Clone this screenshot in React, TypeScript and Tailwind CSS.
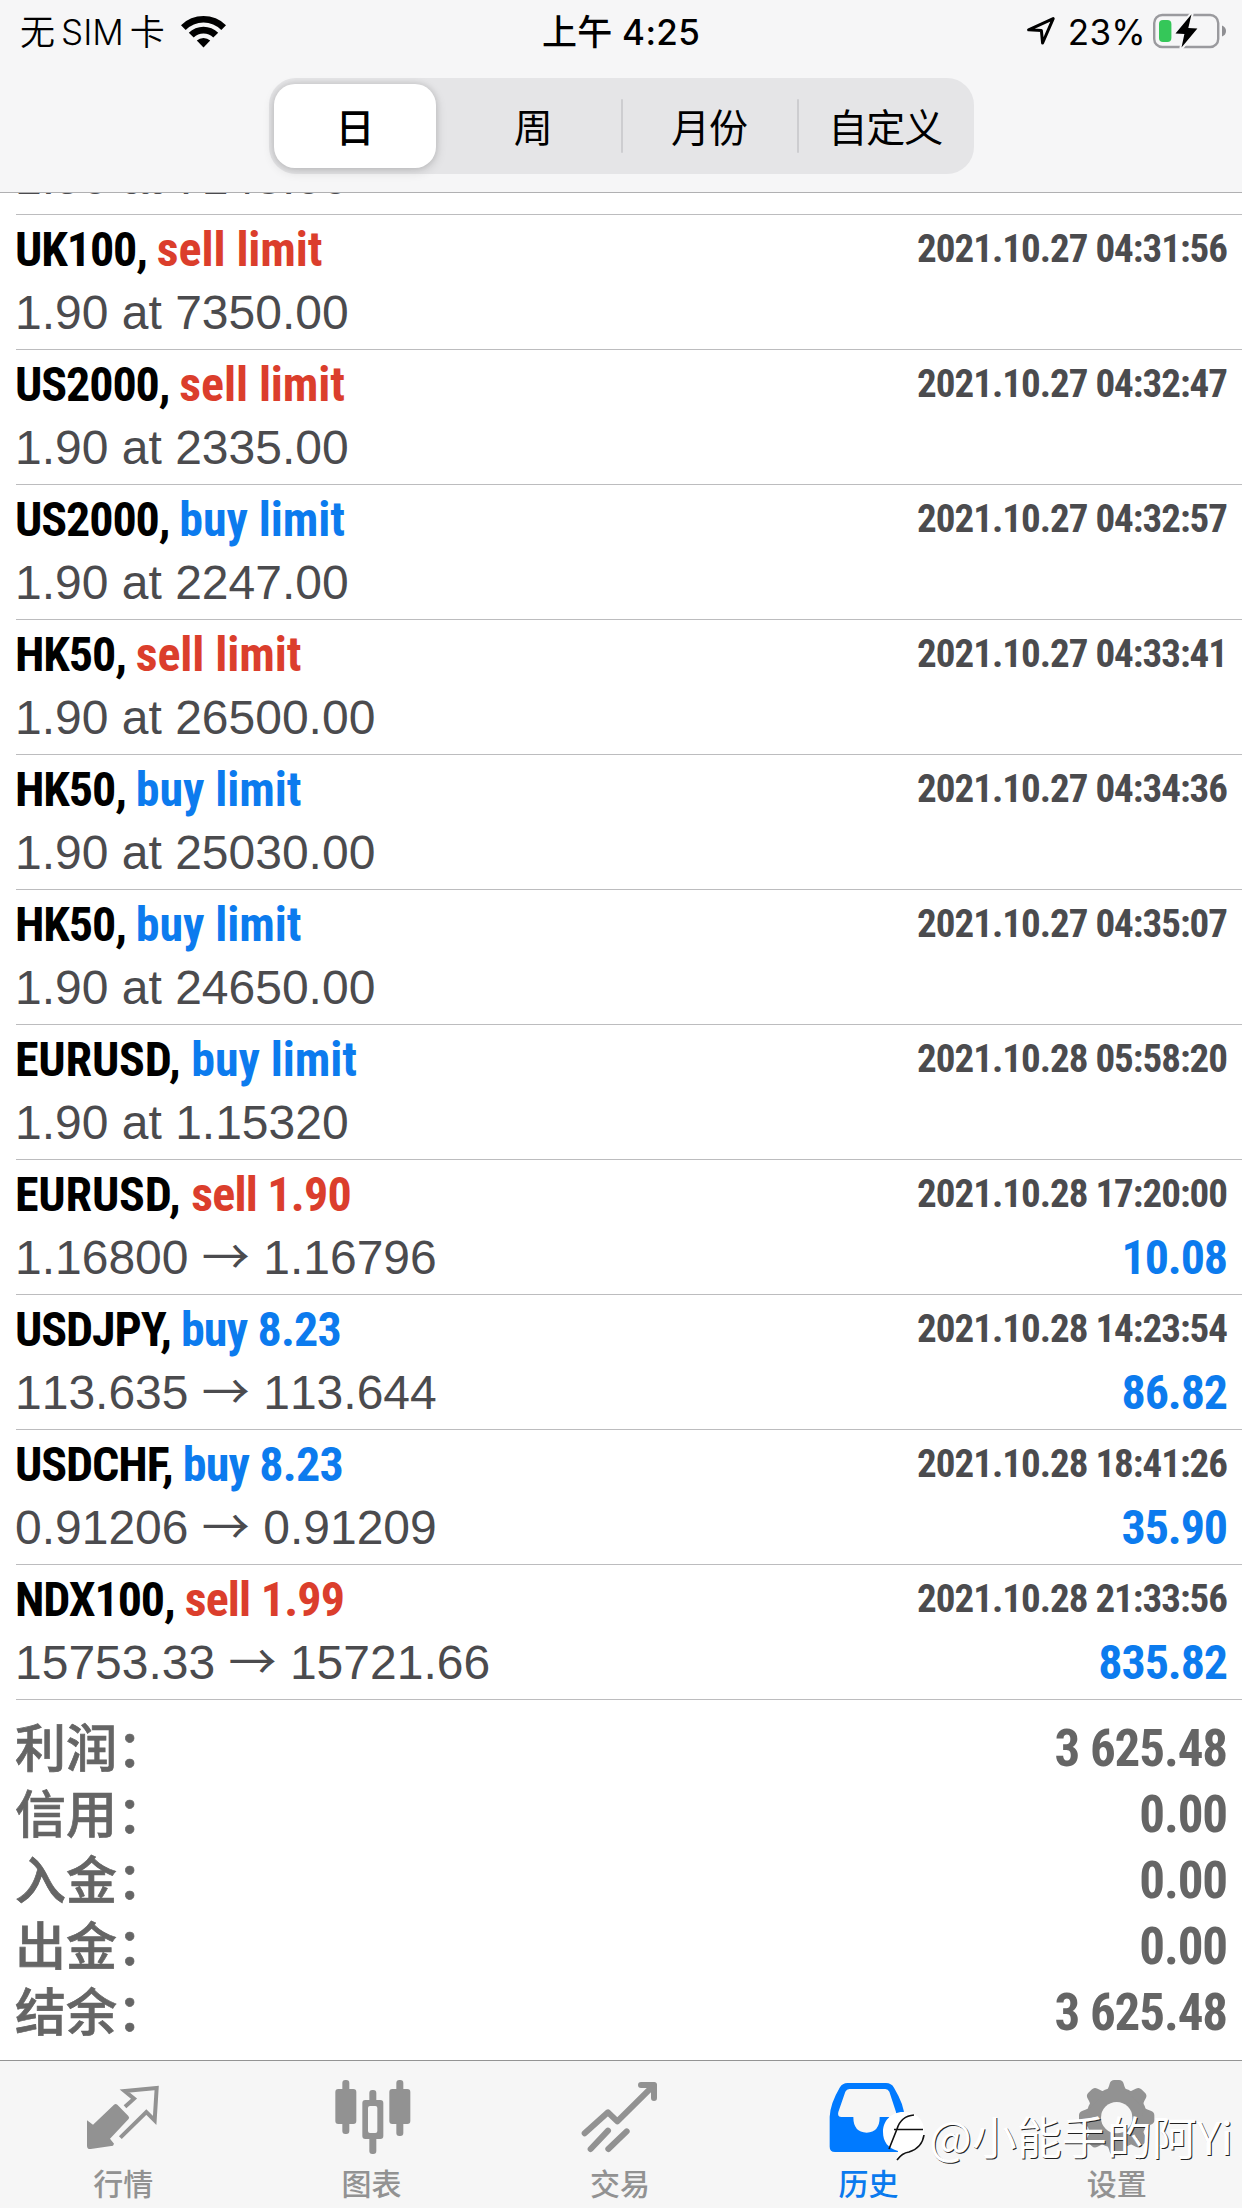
import React from "react"
import clsx from "clsx"

type Side = "sell" | "buy"

interface Deal {
  symbol: string
  side: Side
  action: string
  time: string
  price: string
  closePrice?: string
  profit?: string
}

const deals: Deal[] = [
  { symbol: "UK100", side: "buy", action: "buy limit", time: "2021.10.27 04:31:48", price: "1.90 at 7143.00" },
  { symbol: "UK100", side: "sell", action: "sell limit", time: "2021.10.27 04:31:56", price: "1.90 at 7350.00" },
  { symbol: "US2000", side: "sell", action: "sell limit", time: "2021.10.27 04:32:47", price: "1.90 at 2335.00" },
  { symbol: "US2000", side: "buy", action: "buy limit", time: "2021.10.27 04:32:57", price: "1.90 at 2247.00" },
  { symbol: "HK50", side: "sell", action: "sell limit", time: "2021.10.27 04:33:41", price: "1.90 at 26500.00" },
  { symbol: "HK50", side: "buy", action: "buy limit", time: "2021.10.27 04:34:36", price: "1.90 at 25030.00" },
  { symbol: "HK50", side: "buy", action: "buy limit", time: "2021.10.27 04:35:07", price: "1.90 at 24650.00" },
  { symbol: "EURUSD", side: "buy", action: "buy limit", time: "2021.10.28 05:58:20", price: "1.90 at 1.15320" },
  { symbol: "EURUSD", side: "sell", action: "sell 1.90", time: "2021.10.28 17:20:00", price: "1.16800", closePrice: "1.16796", profit: "10.08" },
  { symbol: "USDJPY", side: "buy", action: "buy 8.23", time: "2021.10.28 14:23:54", price: "113.635", closePrice: "113.644", profit: "86.82" },
  { symbol: "USDCHF", side: "buy", action: "buy 8.23", time: "2021.10.28 18:41:26", price: "0.91206", closePrice: "0.91209", profit: "35.90" },
  { symbol: "NDX100", side: "sell", action: "sell 1.99", time: "2021.10.28 21:33:56", price: "15753.33", closePrice: "15721.66", profit: "835.82" },
]

const summary = [
  { label: "利润：", value: "3 625.48" },
  { label: "信用：", value: "0.00" },
  { label: "入金：", value: "0.00" },
  { label: "出金：", value: "0.00" },
  { label: "结余：", value: "3 625.48" },
]

const periods = ["日", "周", "月份", "自定义"]

function WifiIcon() {
  return (
    <svg viewBox="0 0 45 33" className="ml-[16px] h-[33px] w-[45px]">
      <path d="M0 10.2A32 32 0 0 1 45 10.2L40.3 14.9A25.2 25.2 0 0 0 4.7 14.9Z" />
      <path d="M7.8 17.8A20.8 20.8 0 0 1 37.2 17.8L32.3 22.6A13.9 13.9 0 0 0 12.7 22.6Z" />
      <path d="M15.8 25.6A9.6 9.6 0 0 1 29.2 25.6L22.5 32.6Z" />
    </svg>
  )
}

function LocationIcon() {
  return (
    <svg viewBox="0 0 30 30" className="h-[30px] w-[30px]" fill="none" stroke="#000" strokeWidth="3" strokeLinejoin="round">
      <path d="M27.2 2.6L2.6 13.8L15.4 14.6L16.6 27Z" />
    </svg>
  )
}

function BatteryIcon() {
  return (
    <svg viewBox="0 0 74 36" className="ml-[7px] h-9 w-[74px]">
      <rect x="1.2" y="2" width="64" height="32" rx="8" fill="none" stroke="#9a9a9e" strokeWidth="2.4" />
      <path d="M69 12.5Q73 14 73 18Q73 22 69 23.5Z" fill="#8f8f93" />
      <rect x="6" y="7" width="12.4" height="22" rx="4" fill="#35c759" />
      <path
        d="M38.5 1.2L22.5 20.5L31.4 21L28.5 34.6L44.4 15.4L35.3 15Z"
        fill="#000"
        stroke="#f6f6f7"
        strokeWidth="4"
        strokeLinejoin="round"
        paintOrder="stroke"
      />
    </svg>
  )
}

function QuotesIcon() {
  return (
    <svg viewBox="253 84 240 240" className="size-20">
      <path
        d="M262 211L280 224L343 164Q348 160 353 164L386 198Q391 203 386 208L331 266L343 281L340 287L273 297Q262 298 262 287Z"
        fill="#929292"
      />
      <path d="M376 170L403 146L375 123L471 114L465 211L440 186L362 263" fill="none" stroke="#929292" strokeWidth="12" />
    </svg>
  )
}

function ChartIcon() {
  return (
    <svg viewBox="998 84 240 240" className="size-20" fill="#929292">
      <rect x="1026" y="90" width="21" height="162" rx="9" />
      <rect x="1005" y="117" width="63" height="105" rx="9" />
      <rect x="1188" y="90" width="21" height="168" rx="9" />
      <rect x="1167" y="117" width="63" height="105" rx="9" />
      <rect x="1107" y="120" width="21" height="192" rx="9" />
      <rect x="1086" y="150" width="63" height="117" rx="9" />
      <rect x="1103" y="168" width="28" height="81" rx="6" fill="#f6f6f6" />
    </svg>
  )
}

function TradeIcon() {
  return (
    <svg
      viewBox="483 84 240 240"
      className="size-20"
      fill="none"
      stroke="#929292"
      strokeWidth="18"
      strokeLinecap="round"
      strokeLinejoin="round"
    >
      <path d="M494 250L564 187L592 214L701 106" />
      <path d="M663 105H702V144" />
      <path d="M512 297L564 242M565 297L620 244" />
    </svg>
  )
}

function HistoryIcon() {
  return (
    <svg viewBox="22 84 240 240" className="size-20">
      <path
        fillRule="evenodd"
        d="M78 99H193Q209 99 217 113Q248 165 248 200V290Q248 306 232 306H40Q24 306 24 290V200Q26 160 54 113Q62 99 78 99ZM83 117Q75 117 71 125L50 186Q46 201 60 201H95Q95 247 135 248Q174 247 174 201H212Q227 201 223 186L203 125Q199 117 191 117Z"
        fill="#007aff"
      />
    </svg>
  )
}

function SettingsIcon() {
  const teeth = [0, 45, 90, 135, 180, 225, 270, 315]
  return (
    <svg viewBox="767 84 240 240" className="size-20">
      <g fill="#929292">
        <circle cx="883" cy="203" r="91" />
        {teeth.map((angle) => (
          <path
            key={angle}
            d="M849 126Q858 118 862 101Q865 90 876 90H890Q901 90 904 101Q908 118 917 126Z"
            transform={`rotate(${angle} 883 203)`}
          />
        ))}
      </g>
      <circle cx="883" cy="203" r="47" fill="#f6f6f6" />
    </svg>
  )
}

const tabs: { label: string; icon: React.ElementType; active?: boolean }[] = [
  { label: "行情", icon: QuotesIcon },
  { label: "图表", icon: ChartIcon },
  { label: "交易", icon: TradeIcon },
  { label: "历史", icon: HistoryIcon, active: true },
  { label: "设置", icon: SettingsIcon },
]

function StatusBar() {
  return (
    <div className="grid h-[60px] grid-cols-3 items-center font-['Inter','Noto_Sans_CJK_SC',sans-serif] text-[35px] leading-[60px]">
      <div className="flex items-center pl-5">
        <span className="pt-[2px] font-[350] whitespace-nowrap">
          无<span className="mx-[6px]">SIM</span>卡
        </span>
        <WifiIcon />
      </div>
      <div className="pt-[2px] text-center font-medium tracking-[0.3px]">上午 4:25</div>
      <div className="flex items-center justify-end pr-[15px]">
        <LocationIcon />
        <span className="ml-3 pt-[2px] tracking-[0.3px]">23%</span>
        <BatteryIcon />
      </div>
    </div>
  )
}

function PeriodControl() {
  return (
    <div className="mx-auto mt-[18px] flex h-24 w-[705px] rounded-[27px] bg-[#e5e5e7] font-['Noto_Sans_CJK_SC',sans-serif] text-[39px] leading-[56px]">
      {periods.map((period, i) => (
        <div key={period} className="relative flex flex-1 items-center justify-center">
          {i > 1 && <span className="absolute top-[21px] left-0 h-[54px] w-0.5 rounded bg-[#cdcdd0]" />}
          {i === 0 ? (
            <button className="mr-[3px] h-[84px] w-[162px] rounded-[21px] bg-white pb-[3px] font-medium shadow-[0_3px_12px_rgba(0,0,0,0.14),0_0_6px_rgba(0,0,0,0.12)]">
              {period}
            </button>
          ) : (
            <button className="pb-[3px] tracking-[-1px]">{period}</button>
          )}
        </div>
      ))}
    </div>
  )
}

function DealRow({ deal }: { deal: Deal }) {
  return (
    <li className="flex h-[135px] justify-between border-b border-[#bcbcbe] pt-[7px] pr-[15px]">
      <div className="-ml-px">
        <div className="font-['Roboto_Condensed',sans-serif] text-[48px] leading-[56px] font-bold whitespace-nowrap">
          <span
            className={clsx(
              "text-black",
              deal.symbol === "EURUSD" ? "tracking-[-0.2px]" : "tracking-[-1.1px]"
            )}
          >
            {deal.symbol},{" "}
          </span>
          <span
            className={clsx(
              deal.side === "sell" ? "text-[#db3e2c]" : "text-[#0c7bee]",
              deal.profit ? "tracking-[-0.8px]" : "tracking-[-0.1px]"
            )}
          >
            {deal.action}
          </span>
        </div>
        <div className="mt-[6px] font-['Liberation_Sans','Noto_Sans_CJK_SC',sans-serif] text-[48px] leading-[58px] whitespace-nowrap text-[#4b4b4e] [font-kerning:none]">
          {deal.price}
          {deal.closePrice && (
            <>
              {" "}
              <span className="font-['Noto_Sans_CJK_SC',sans-serif] leading-none">→</span> {deal.closePrice}
            </>
          )}
        </div>
      </div>
      <div className="text-right font-['Roboto_Condensed',sans-serif] font-bold">
        <div className="text-[39px] leading-[55px] tracking-[-1px] text-[#4b4b4e]">{deal.time}</div>
        {deal.profit && (
          <div className="mt-2 text-[48px] leading-[56px] tracking-[-1.1px] text-[#0c7bee]">{deal.profit}</div>
        )}
      </div>
    </li>
  )
}

function Summary() {
  return (
    <dl className="pt-[15px] pr-[15px] pl-[15px] text-[#656565]">
      {summary.map((row) => (
        <div key={row.label} className="flex h-[66px] justify-between">
          <dt className="-mt-[3px] h-[66px] font-['Noto_Sans_CJK_SC',sans-serif] text-[51px] leading-[66px] font-medium [-webkit-text-stroke:0.7px_#656565]">
            {row.label}
          </dt>
          <dd className="pt-[2px] font-['Roboto_Condensed',sans-serif] text-[51px] leading-[64px] font-bold tracking-[-1.1px]">
            {row.value}
          </dd>
        </div>
      ))}
    </dl>
  )
}

function TabBar() {
  return (
    <nav className="flex h-[148px] shrink-0 border-t border-[#949494] bg-[#f6f6f6]">
      {tabs.map((tab) => {
        const Icon = tab.icon
        return (
          <a key={tab.label} href="#" className="flex flex-1 flex-col items-center pt-[17px]">
            <Icon />
            <span
              className={clsx(
                "mt-1 pr-[2px] font-['Noto_Sans_CJK_SC',sans-serif] text-[30px] leading-[40px] font-medium",
                tab.active ? "text-[#0a7aee]" : "text-[#929292]"
              )}
            >
              {tab.label}
            </span>
          </a>
        )
      })}
    </nav>
  )
}

function Watermark() {
  return (
    <div className="absolute right-[9px] bottom-[42px] flex items-center">
      <svg viewBox="0 0 44 52" className="mr-[3px] h-[52px] w-11">
        <path d="M21 2C34 2 42 9 42 21C42 33 34 40 23 42C20 43 18 46 15 49L16 41C6 38 1 32 1 22C1 11 9 2 21 2Z" fill="#fff" />
        <path d="M7 39L15 19Q19 6 32 5M12 19.5H41M42 25Q40 38 27 42Q20 43 15 50" fill="none" stroke="#111" strokeWidth="1.6" />
      </svg>
      <span className="font-['Noto_Sans_CJK_SC',sans-serif] text-[45px] leading-[60px] whitespace-nowrap text-white [text-shadow:1px_1px_0_#222]">
        @小能手的阿Yi
      </span>
    </div>
  )
}

export default function App() {
  return (
    <div className="relative flex h-[2208px] w-[1242px] flex-col overflow-hidden bg-white text-black">
      <header className="h-[193px] shrink-0 border-b border-[#b0b0b2] bg-[#f6f6f7]">
        <StatusBar />
        <PeriodControl />
      </header>
      <main className="flex-1 overflow-hidden">
        <ul className="-mt-[113px] pl-4">
          {deals.map((deal) => (
            <DealRow key={deal.time} deal={deal} />
          ))}
        </ul>
        <Summary />
      </main>
      <TabBar />
      <Watermark />
    </div>
  )
}
